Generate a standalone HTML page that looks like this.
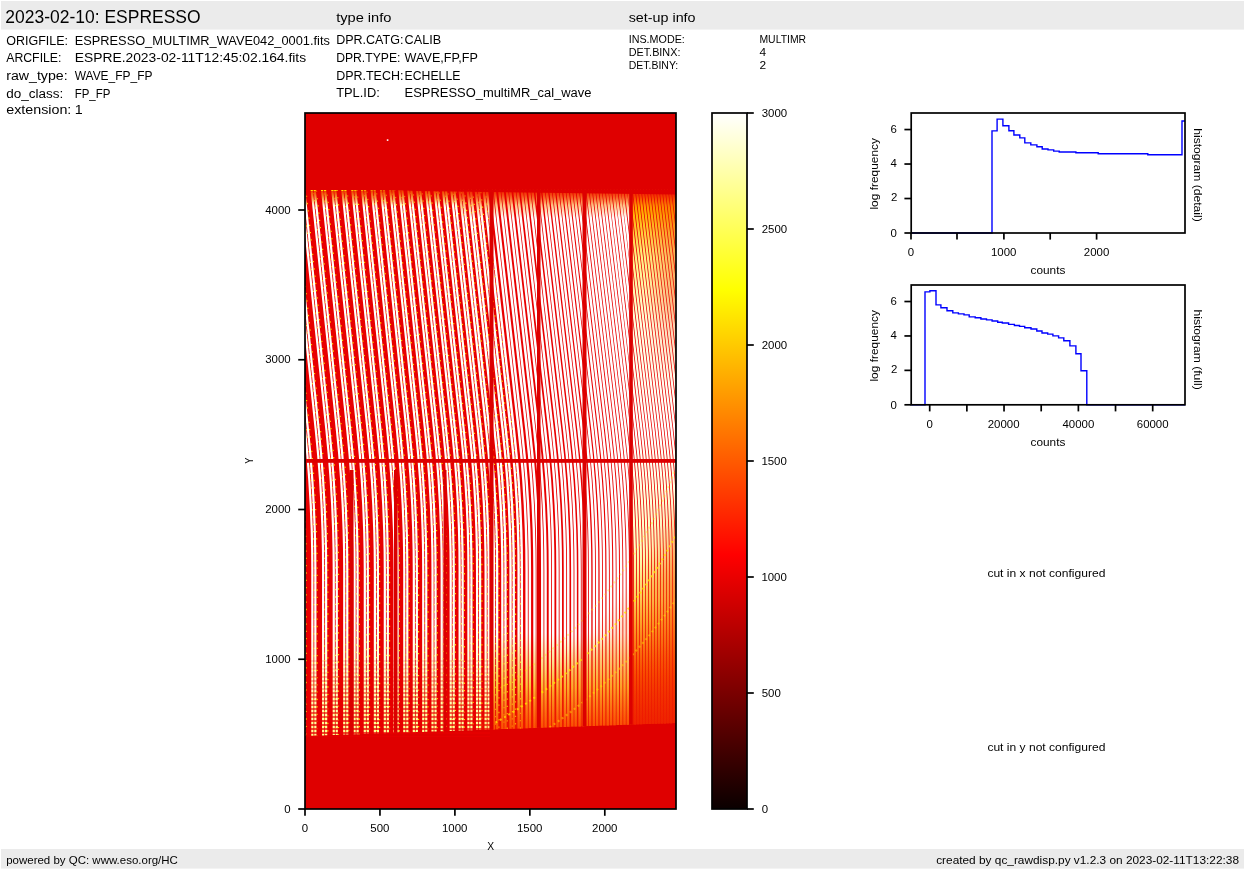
<!DOCTYPE html>
<html><head><meta charset="utf-8"><title>ESPRESSO raw display</title>
<style>html,body{margin:0;padding:0;background:#fff;width:1245px;height:870px;overflow:hidden}svg{display:block}text{font-family:"Liberation Sans",sans-serif}</style>
</head><body><svg width="1245" height="870" viewBox="0 0 1245 870"><rect x="1" y="1" width="1243" height="28.6" fill="#ebebeb"/><rect x="1" y="849" width="1243" height="19.6" fill="#ebebeb"/><defs><clipPath id="imclip"><rect x="305" y="113" width="371" height="696"/></clipPath></defs><g clip-path="url(#imclip)"><rect x="305" y="113" width="371" height="696" fill="#df0000"/><polygon points="305,190.0 676,190.0 676,723.0 305,736.0" fill="#e80000"/><defs><linearGradient id="rgrad" gradientUnits="userSpaceOnUse" x1="0" y1="191" x2="0" y2="728"><stop offset="0" stop-color="#ff6000"/><stop offset="0.04" stop-color="#ffb000"/><stop offset="0.12" stop-color="#fff080"/><stop offset="0.25" stop-color="#ffffe0"/><stop offset="0.45" stop-color="#ffffff"/><stop offset="0.66" stop-color="#ffffc0"/><stop offset="0.8" stop-color="#ffd040"/><stop offset="0.9" stop-color="#ff8000"/><stop offset="1" stop-color="#f03000"/></linearGradient><linearGradient id="mgrad" gradientUnits="userSpaceOnUse" x1="0" y1="191" x2="0" y2="730"><stop offset="0" stop-color="#ff8000"/><stop offset="0.05" stop-color="#ffffff"/><stop offset="0.82" stop-color="#ffffff"/><stop offset="0.92" stop-color="#ffe040"/><stop offset="1" stop-color="#ff6000"/></linearGradient><linearGradient id="lgrad" gradientUnits="userSpaceOnUse" x1="0" y1="191" x2="0" y2="736"><stop offset="0" stop-color="#ffe000"/><stop offset="0.03" stop-color="#ffffff"/><stop offset="0.8" stop-color="#ffffff"/><stop offset="1" stop-color="#ffff90"/></linearGradient><clipPath id="cl"><rect x="305" y="113" width="326" height="696"/></clipPath><clipPath id="cr"><rect x="631" y="113" width="45" height="696"/></clipPath><linearGradient id="bf" gradientUnits="userSpaceOnUse" x1="0" y1="640" x2="0" y2="736"><stop offset="0" stop-color="#e80000" stop-opacity="0"/><stop offset="1" stop-color="#e80000" stop-opacity="0.25"/></linearGradient><radialGradient id="wedge" gradientUnits="userSpaceOnUse" cx="270" cy="325" r="600"><stop offset="0.735" stop-color="#ff6000" stop-opacity="0"/><stop offset="0.775" stop-color="#ff6000" stop-opacity="0.22"/><stop offset="0.9" stop-color="#f84000" stop-opacity="0.38"/><stop offset="1" stop-color="#f03000" stop-opacity="0.45"/></radialGradient><linearGradient id="tf" gradientUnits="userSpaceOnUse" x1="0" y1="191" x2="0" y2="205"><stop offset="0" stop-color="#e80000" stop-opacity="0.7"/><stop offset="1" stop-color="#e80000" stop-opacity="0"/></linearGradient></defs><g clip-path="url(#cl)"><path d="M223.65,190.0 L231.00,260.0 L238.35,330.0 L245.70,400.0 L248.85,430.0 L251.24,455.0 L253.16,480.0 L254.62,505.0 L255.60,530.0 L256.05,550.0 L256.20,570.0 L256.20,736.0" stroke="url(#lgrad)" stroke-width="2.20" fill="none"/><path d="M225.35,190.0 L232.70,260.0 L240.05,330.0 L247.40,400.0 L250.55,430.0 L252.94,455.0 L254.86,480.0 L256.32,505.0 L257.30,530.0 L257.75,550.0 L257.90,570.0 L257.90,736.0" stroke="#ffd800" stroke-width="1.20" fill="none" stroke-dasharray="1.3 6" stroke-dashoffset="2.3"/><path d="M226.65,190.0 L234.00,260.0 L241.35,330.0 L248.70,400.0 L251.85,430.0 L254.24,455.0 L256.16,480.0 L257.62,505.0 L258.60,530.0 L259.05,550.0 L259.20,570.0 L259.20,736.0" stroke="url(#lgrad)" stroke-width="2.20" fill="none"/><path d="M228.35,190.0 L235.70,260.0 L243.05,330.0 L250.40,400.0 L253.55,430.0 L255.94,455.0 L257.86,480.0 L259.32,505.0 L260.30,530.0 L260.75,550.0 L260.90,570.0 L260.90,736.0" stroke="#ffd800" stroke-width="1.20" fill="none" stroke-dasharray="1.3 6" stroke-dashoffset="1.1"/><path d="M235.19,190.0 L242.54,260.0 L249.89,330.0 L257.24,400.0 L260.39,430.0 L262.78,455.0 L264.70,480.0 L266.15,505.0 L267.14,530.0 L267.59,550.0 L267.74,570.0 L267.74,736.0" stroke="url(#lgrad)" stroke-width="2.20" fill="none"/><path d="M236.89,190.0 L244.24,260.0 L251.59,330.0 L258.94,400.0 L262.09,430.0 L264.48,455.0 L266.40,480.0 L267.85,505.0 L268.84,530.0 L269.29,550.0 L269.44,570.0 L269.44,736.0" stroke="#ffd800" stroke-width="1.20" fill="none" stroke-dasharray="1.3 6" stroke-dashoffset="4.6"/><path d="M238.19,190.0 L245.54,260.0 L252.89,330.0 L260.24,400.0 L263.39,430.0 L265.78,455.0 L267.70,480.0 L269.15,505.0 L270.14,530.0 L270.59,550.0 L270.74,570.0 L270.74,736.0" stroke="url(#lgrad)" stroke-width="2.20" fill="none"/><path d="M239.89,190.0 L247.24,260.0 L254.59,330.0 L261.94,400.0 L265.09,430.0 L267.48,455.0 L269.40,480.0 L270.85,505.0 L271.84,530.0 L272.29,550.0 L272.44,570.0 L272.44,736.0" stroke="#ffd800" stroke-width="1.20" fill="none" stroke-dasharray="1.3 6" stroke-dashoffset="0.5"/><path d="M246.57,190.0 L253.92,260.0 L261.27,330.0 L268.62,400.0 L271.77,430.0 L274.16,455.0 L276.08,480.0 L277.54,505.0 L278.52,530.0 L278.97,550.0 L279.12,570.0 L279.12,736.0" stroke="url(#lgrad)" stroke-width="2.20" fill="none"/><path d="M248.27,190.0 L255.62,260.0 L262.97,330.0 L270.32,400.0 L273.47,430.0 L275.86,455.0 L277.78,480.0 L279.24,505.0 L280.22,530.0 L280.67,550.0 L280.82,570.0 L280.82,736.0" stroke="#ffd800" stroke-width="1.20" fill="none" stroke-dasharray="1.3 6" stroke-dashoffset="3.8"/><path d="M249.57,190.0 L256.92,260.0 L264.27,330.0 L271.62,400.0 L274.77,430.0 L277.16,455.0 L279.08,480.0 L280.54,505.0 L281.52,530.0 L281.97,550.0 L282.12,570.0 L282.12,736.0" stroke="url(#lgrad)" stroke-width="2.20" fill="none"/><path d="M251.27,190.0 L258.62,260.0 L265.97,330.0 L273.32,400.0 L276.47,430.0 L278.86,455.0 L280.78,480.0 L282.24,505.0 L283.22,530.0 L283.67,550.0 L283.82,570.0 L283.82,736.0" stroke="#ffd800" stroke-width="1.20" fill="none" stroke-dasharray="1.3 6" stroke-dashoffset="2.6"/><path d="M257.80,190.0 L265.15,260.0 L272.50,330.0 L279.85,400.0 L283.00,430.0 L285.39,455.0 L287.31,480.0 L288.77,505.0 L289.75,530.0 L290.20,550.0 L290.35,570.0 L290.35,736.0" stroke="url(#lgrad)" stroke-width="2.20" fill="none"/><path d="M259.50,190.0 L266.85,260.0 L274.20,330.0 L281.55,400.0 L284.70,430.0 L287.09,455.0 L289.01,480.0 L290.47,505.0 L291.45,530.0 L291.90,550.0 L292.05,570.0 L292.05,736.0" stroke="#ffd800" stroke-width="1.20" fill="none" stroke-dasharray="1.3 6" stroke-dashoffset="0.4"/><path d="M260.80,190.0 L268.15,260.0 L275.50,330.0 L282.85,400.0 L286.00,430.0 L288.39,455.0 L290.31,480.0 L291.77,505.0 L292.75,530.0 L293.20,550.0 L293.35,570.0 L293.35,736.0" stroke="url(#lgrad)" stroke-width="2.20" fill="none"/><path d="M262.50,190.0 L269.85,260.0 L277.20,330.0 L284.55,400.0 L287.70,430.0 L290.09,455.0 L292.01,480.0 L293.47,505.0 L294.45,530.0 L294.90,550.0 L295.05,570.0 L295.05,736.0" stroke="#ffd800" stroke-width="1.20" fill="none" stroke-dasharray="1.3 6" stroke-dashoffset="3.6"/><path d="M268.88,190.0 L276.23,260.0 L283.58,330.0 L290.93,400.0 L294.08,430.0 L296.47,455.0 L298.39,480.0 L299.84,505.0 L300.83,530.0 L301.28,550.0 L301.43,570.0 L301.43,736.0" stroke="url(#lgrad)" stroke-width="2.20" fill="none"/><path d="M270.58,190.0 L277.93,260.0 L285.28,330.0 L292.63,400.0 L295.78,430.0 L298.17,455.0 L300.09,480.0 L301.54,505.0 L302.53,530.0 L302.98,550.0 L303.13,570.0 L303.13,736.0" stroke="#ffd800" stroke-width="1.20" fill="none" stroke-dasharray="1.3 6" stroke-dashoffset="0.3"/><path d="M271.88,190.0 L279.23,260.0 L286.58,330.0 L293.93,400.0 L297.08,430.0 L299.47,455.0 L301.39,480.0 L302.84,505.0 L303.83,530.0 L304.28,550.0 L304.43,570.0 L304.43,736.0" stroke="url(#lgrad)" stroke-width="2.20" fill="none"/><path d="M273.58,190.0 L280.93,260.0 L288.28,330.0 L295.63,400.0 L298.78,430.0 L301.17,455.0 L303.09,480.0 L304.54,505.0 L305.53,530.0 L305.98,550.0 L306.13,570.0 L306.13,736.0" stroke="#ffd800" stroke-width="1.20" fill="none" stroke-dasharray="1.3 6" stroke-dashoffset="3.0"/><path d="M279.81,190.0 L287.16,260.0 L294.51,330.0 L301.86,400.0 L305.01,430.0 L307.40,455.0 L309.32,480.0 L310.77,505.0 L311.76,530.0 L312.21,550.0 L312.36,570.0 L312.36,735.7" stroke="url(#lgrad)" stroke-width="2.20" fill="none"/><path d="M281.51,190.0 L288.86,260.0 L296.21,330.0 L303.56,400.0 L306.71,430.0 L309.10,455.0 L311.02,480.0 L312.47,505.0 L313.46,530.0 L313.91,550.0 L314.06,570.0 L314.06,735.7" stroke="#ffd800" stroke-width="1.20" fill="none" stroke-dasharray="1.3 6" stroke-dashoffset="0.5"/><path d="M282.81,190.0 L290.16,260.0 L297.51,330.0 L304.86,400.0 L308.01,430.0 L310.40,455.0 L312.32,480.0 L313.77,505.0 L314.76,530.0 L315.21,550.0 L315.36,570.0 L315.36,735.6" stroke="url(#lgrad)" stroke-width="2.20" fill="none"/><path d="M284.51,190.0 L291.86,260.0 L299.21,330.0 L306.56,400.0 L309.71,430.0 L312.10,455.0 L314.02,480.0 L315.47,505.0 L316.46,530.0 L316.91,550.0 L317.06,570.0 L317.06,735.6" stroke="#ffd800" stroke-width="1.20" fill="none" stroke-dasharray="1.3 6" stroke-dashoffset="0.6"/><path d="M290.59,190.0 L297.94,260.0 L305.29,330.0 L312.64,400.0 L315.79,430.0 L318.18,455.0 L320.10,480.0 L321.55,505.0 L322.54,530.0 L322.99,550.0 L323.14,570.0 L323.14,735.4" stroke="url(#lgrad)" stroke-width="2.20" fill="none"/><path d="M292.29,190.0 L299.64,260.0 L306.99,330.0 L314.34,400.0 L317.49,430.0 L319.88,455.0 L321.80,480.0 L323.25,505.0 L324.24,530.0 L324.69,550.0 L324.84,570.0 L324.84,735.4" stroke="#ffd800" stroke-width="1.20" fill="none" stroke-dasharray="1.3 6" stroke-dashoffset="3.0"/><path d="M293.59,190.0 L300.94,260.0 L308.29,330.0 L315.64,400.0 L318.79,430.0 L321.18,455.0 L323.10,480.0 L324.55,505.0 L325.54,530.0 L325.99,550.0 L326.14,570.0 L326.14,735.3" stroke="url(#lgrad)" stroke-width="2.20" fill="none"/><path d="M295.29,190.0 L302.64,260.0 L309.99,330.0 L317.34,400.0 L320.49,430.0 L322.88,455.0 L324.80,480.0 L326.25,505.0 L327.24,530.0 L327.69,550.0 L327.84,570.0 L327.84,735.3" stroke="#ffd800" stroke-width="1.20" fill="none" stroke-dasharray="1.3 6" stroke-dashoffset="5.8"/><path d="M301.22,190.0 L308.57,260.0 L315.92,330.0 L323.27,400.0 L326.42,430.0 L328.81,455.0 L330.73,480.0 L332.19,505.0 L333.17,530.0 L333.62,550.0 L333.77,570.0 L333.77,735.0" stroke="url(#lgrad)" stroke-width="2.20" fill="none"/><path d="M302.92,190.0 L310.27,260.0 L317.62,330.0 L324.97,400.0 L328.12,430.0 L330.51,455.0 L332.43,480.0 L333.89,505.0 L334.87,530.0 L335.32,550.0 L335.47,570.0 L335.47,735.0" stroke="#ffd800" stroke-width="1.20" fill="none" stroke-dasharray="1.3 6" stroke-dashoffset="0.9"/><path d="M304.22,190.0 L311.57,260.0 L318.92,330.0 L326.27,400.0 L329.42,430.0 L331.81,455.0 L333.73,480.0 L335.19,505.0 L336.17,530.0 L336.62,550.0 L336.77,570.0 L336.77,734.9" stroke="url(#lgrad)" stroke-width="2.20" fill="none"/><path d="M305.92,190.0 L313.27,260.0 L320.62,330.0 L327.97,400.0 L331.12,430.0 L333.51,455.0 L335.43,480.0 L336.89,505.0 L337.87,530.0 L338.32,550.0 L338.47,570.0 L338.47,734.9" stroke="#ffd800" stroke-width="1.20" fill="none" stroke-dasharray="1.3 6" stroke-dashoffset="1.6"/><path d="M311.71,190.0 L319.06,260.0 L326.41,330.0 L333.76,400.0 L336.91,430.0 L339.30,455.0 L341.23,480.0 L342.68,505.0 L343.66,530.0 L344.11,550.0 L344.26,570.0 L344.26,734.6" stroke="url(#lgrad)" stroke-width="2.20" fill="none"/><path d="M313.41,190.0 L320.76,260.0 L328.11,330.0 L335.46,400.0 L338.61,430.0 L341.00,455.0 L342.93,480.0 L344.38,505.0 L345.36,530.0 L345.81,550.0 L345.96,570.0 L345.96,734.6" stroke="#ffd800" stroke-width="1.20" fill="none" stroke-dasharray="1.3 6" stroke-dashoffset="4.4"/><path d="M314.71,190.0 L322.06,260.0 L329.41,330.0 L336.76,400.0 L339.91,430.0 L342.30,455.0 L344.23,480.0 L345.68,505.0 L346.66,530.0 L347.11,550.0 L347.26,570.0 L347.26,734.5" stroke="url(#lgrad)" stroke-width="2.20" fill="none"/><path d="M316.41,190.0 L323.76,260.0 L331.11,330.0 L338.46,400.0 L341.61,430.0 L344.00,455.0 L345.93,480.0 L347.38,505.0 L348.36,530.0 L348.81,550.0 L348.96,570.0 L348.96,734.5" stroke="#ffd800" stroke-width="1.20" fill="none" stroke-dasharray="1.3 6" stroke-dashoffset="6.6"/><path d="M322.06,190.0 L329.41,260.0 L336.76,330.0 L344.11,400.0 L347.26,430.0 L349.65,455.0 L351.57,480.0 L353.03,505.0 L354.01,530.0 L354.46,550.0 L354.61,570.0 L354.61,734.3" stroke="url(#lgrad)" stroke-width="2.20" fill="none"/><path d="M323.76,190.0 L331.11,260.0 L338.46,330.0 L345.81,400.0 L348.96,430.0 L351.35,455.0 L353.27,480.0 L354.73,505.0 L355.71,530.0 L356.16,550.0 L356.31,570.0 L356.31,734.3" stroke="#ffd800" stroke-width="1.20" fill="none" stroke-dasharray="1.3 6" stroke-dashoffset="4.0"/><path d="M325.06,190.0 L332.41,260.0 L339.76,330.0 L347.11,400.0 L350.26,430.0 L352.65,455.0 L354.57,480.0 L356.03,505.0 L357.01,530.0 L357.46,550.0 L357.61,570.0 L357.61,734.2" stroke="url(#lgrad)" stroke-width="2.20" fill="none"/><path d="M326.76,190.0 L334.11,260.0 L341.46,330.0 L348.81,400.0 L351.96,430.0 L354.35,455.0 L356.27,480.0 L357.73,505.0 L358.71,530.0 L359.16,550.0 L359.31,570.0 L359.31,734.2" stroke="#ffd800" stroke-width="1.20" fill="none" stroke-dasharray="1.3 6" stroke-dashoffset="2.8"/><path d="M332.27,190.0 L339.62,260.0 L346.97,330.0 L354.32,400.0 L357.47,430.0 L359.86,455.0 L361.78,480.0 L363.24,505.0 L364.22,530.0 L364.67,550.0 L364.82,570.0 L364.82,733.9" stroke="url(#lgrad)" stroke-width="2.20" fill="none"/><path d="M333.97,190.0 L341.32,260.0 L348.67,330.0 L356.02,400.0 L359.17,430.0 L361.56,455.0 L363.48,480.0 L364.94,505.0 L365.92,530.0 L366.37,550.0 L366.52,570.0 L366.52,733.9" stroke="#ffd800" stroke-width="1.20" fill="none" stroke-dasharray="1.3 6" stroke-dashoffset="6.8"/><path d="M335.27,190.0 L342.62,260.0 L349.97,330.0 L357.32,400.0 L360.47,430.0 L362.86,455.0 L364.78,480.0 L366.24,505.0 L367.22,530.0 L367.67,550.0 L367.82,570.0 L367.82,733.8" stroke="url(#lgrad)" stroke-width="2.20" fill="none"/><path d="M336.97,190.0 L344.32,260.0 L351.67,330.0 L359.02,400.0 L362.17,430.0 L364.56,455.0 L366.48,480.0 L367.94,505.0 L368.92,530.0 L369.37,550.0 L369.52,570.0 L369.52,733.8" stroke="#ffd800" stroke-width="1.20" fill="none" stroke-dasharray="1.3 6" stroke-dashoffset="0.3"/><path d="M342.34,190.0 L349.69,260.0 L357.04,330.0 L364.39,400.0 L367.54,430.0 L369.94,455.0 L371.86,480.0 L373.31,505.0 L374.29,530.0 L374.74,550.0 L374.89,570.0 L374.89,733.6" stroke="url(#lgrad)" stroke-width="2.20" fill="none"/><path d="M344.04,190.0 L351.39,260.0 L358.74,330.0 L366.09,400.0 L369.24,430.0 L371.64,455.0 L373.56,480.0 L375.01,505.0 L375.99,530.0 L376.44,550.0 L376.59,570.0 L376.59,733.6" stroke="#ffd800" stroke-width="1.20" fill="none" stroke-dasharray="1.3 6" stroke-dashoffset="6.0"/><path d="M345.34,190.0 L352.69,260.0 L360.04,330.0 L367.39,400.0 L370.54,430.0 L372.94,455.0 L374.86,480.0 L376.31,505.0 L377.29,530.0 L377.74,550.0 L377.89,570.0 L377.89,733.4" stroke="url(#lgrad)" stroke-width="2.20" fill="none"/><path d="M347.04,190.0 L354.39,260.0 L361.74,330.0 L369.09,400.0 L372.24,430.0 L374.64,455.0 L376.56,480.0 L378.01,505.0 L378.99,530.0 L379.44,550.0 L379.59,570.0 L379.59,733.4" stroke="#ffd800" stroke-width="1.20" fill="none" stroke-dasharray="1.3 6" stroke-dashoffset="2.0"/><path d="M352.28,190.0 L359.63,260.0 L366.98,330.0 L374.33,400.0 L377.48,430.0 L379.87,455.0 L381.79,480.0 L383.25,505.0 L384.23,530.0 L384.68,550.0 L384.83,570.0 L384.83,733.2" stroke="url(#lgrad)" stroke-width="2.20" fill="none"/><path d="M353.98,190.0 L361.33,260.0 L368.68,330.0 L376.03,400.0 L379.18,430.0 L381.57,455.0 L383.49,480.0 L384.95,505.0 L385.93,530.0 L386.38,550.0 L386.53,570.0 L386.53,733.2" stroke="#ffd800" stroke-width="1.20" fill="none" stroke-dasharray="1.3 6" stroke-dashoffset="1.0"/><path d="M355.28,190.0 L362.63,260.0 L369.98,330.0 L377.33,400.0 L380.48,430.0 L382.87,455.0 L384.79,480.0 L386.25,505.0 L387.23,530.0 L387.68,550.0 L387.83,570.0 L387.83,733.1" stroke="url(#lgrad)" stroke-width="2.20" fill="none"/><path d="M356.98,190.0 L364.33,260.0 L371.68,330.0 L379.03,400.0 L382.18,430.0 L384.57,455.0 L386.49,480.0 L387.95,505.0 L388.93,530.0 L389.38,550.0 L389.53,570.0 L389.53,733.1" stroke="#ffd800" stroke-width="1.20" fill="none" stroke-dasharray="1.3 6" stroke-dashoffset="0.8"/><path d="M362.08,190.0 L369.43,260.0 L376.78,330.0 L384.13,400.0 L387.28,430.0 L389.67,455.0 L391.60,480.0 L393.05,505.0 L394.03,530.0 L394.48,550.0 L394.63,570.0 L394.63,732.9" stroke="url(#lgrad)" stroke-width="2.20" fill="none"/><path d="M363.78,190.0 L371.13,260.0 L378.48,330.0 L385.83,400.0 L388.98,430.0 L391.37,455.0 L393.30,480.0 L394.75,505.0 L395.73,530.0 L396.18,550.0 L396.33,570.0 L396.33,732.9" stroke="#ffd800" stroke-width="1.20" fill="none" stroke-dasharray="1.3 6" stroke-dashoffset="2.2"/><path d="M365.08,190.0 L372.43,260.0 L379.78,330.0 L387.13,400.0 L390.28,430.0 L392.67,455.0 L394.60,480.0 L396.05,505.0 L397.03,530.0 L397.48,550.0 L397.63,570.0 L397.63,732.8" stroke="url(#lgrad)" stroke-width="2.20" fill="none"/><path d="M366.78,190.0 L374.13,260.0 L381.48,330.0 L388.83,400.0 L391.98,430.0 L394.37,455.0 L396.30,480.0 L397.75,505.0 L398.73,530.0 L399.18,550.0 L399.33,570.0 L399.33,732.8" stroke="#ffd800" stroke-width="1.20" fill="none" stroke-dasharray="1.3 6" stroke-dashoffset="5.7"/><path d="M371.67,190.0 L379.04,260.0 L386.40,330.0 L393.77,400.0 L396.93,430.0 L399.33,455.0 L401.26,480.0 L402.71,505.0 L403.70,530.0 L404.15,550.0 L404.30,570.0 L404.30,732.5" stroke="url(#lgrad)" stroke-width="2.20" fill="none"/><path d="M373.33,190.0 L380.71,260.0 L388.09,330.0 L395.46,400.0 L398.62,430.0 L401.02,455.0 L402.95,480.0 L404.41,505.0 L405.40,530.0 L405.85,550.0 L406.00,570.0 L406.00,732.5" stroke="#ffd800" stroke-width="1.20" fill="none" stroke-dasharray="1.3 6" stroke-dashoffset="1.3"/><path d="M374.60,190.0 L381.99,260.0 L389.37,330.0 L396.75,400.0 L399.92,430.0 L402.32,455.0 L404.25,480.0 L405.71,505.0 L406.70,530.0 L407.15,550.0 L407.30,570.0 L407.30,732.4" stroke="url(#lgrad)" stroke-width="2.20" fill="none"/><path d="M376.27,190.0 L383.66,260.0 L391.05,330.0 L398.44,400.0 L401.61,430.0 L404.02,455.0 L405.95,480.0 L407.41,505.0 L408.40,530.0 L408.85,550.0 L409.00,570.0 L409.00,732.4" stroke="#ffd800" stroke-width="1.20" fill="none" stroke-dasharray="1.3 6" stroke-dashoffset="4.1"/><path d="M381.01,190.0 L388.42,260.0 L395.84,330.0 L403.25,400.0 L406.43,430.0 L408.84,455.0 L410.78,480.0 L412.24,505.0 L413.24,530.0 L413.69,550.0 L413.84,570.0 L413.84,732.2" stroke="url(#lgrad)" stroke-width="2.20" fill="none"/><path d="M382.68,190.0 L390.10,260.0 L397.52,330.0 L404.94,400.0 L408.12,430.0 L410.53,455.0 L412.47,480.0 L413.94,505.0 L414.94,530.0 L415.39,550.0 L415.54,570.0 L415.54,732.2" stroke="#ffd800" stroke-width="1.20" fill="none" stroke-dasharray="1.3 6" stroke-dashoffset="4.5"/><path d="M383.95,190.0 L391.38,260.0 L398.80,330.0 L406.23,400.0 L409.41,430.0 L411.83,455.0 L413.77,480.0 L415.24,505.0 L416.24,530.0 L416.69,550.0 L416.84,570.0 L416.84,732.1" stroke="url(#lgrad)" stroke-width="2.20" fill="none"/><path d="M385.62,190.0 L393.05,260.0 L400.49,330.0 L407.92,400.0 L411.11,430.0 L413.53,455.0 L415.47,480.0 L416.94,505.0 L417.93,530.0 L418.39,550.0 L418.54,570.0 L418.54,732.1" stroke="#ffd800" stroke-width="1.20" fill="none" stroke-dasharray="1.3 6" stroke-dashoffset="2.6"/><path d="M390.23,190.0 L397.69,260.0 L405.14,330.0 L412.60,400.0 L415.80,430.0 L418.22,455.0 L420.17,480.0 L421.64,505.0 L422.64,530.0 L423.10,550.0 L423.25,570.0 L423.25,731.9" stroke="url(#lgrad)" stroke-width="2.20" fill="none"/><path d="M391.90,190.0 L399.36,260.0 L406.83,330.0 L414.29,400.0 L417.49,430.0 L419.92,455.0 L421.87,480.0 L423.34,505.0 L424.34,530.0 L424.80,550.0 L424.95,570.0 L424.95,731.9" stroke="#ffd800" stroke-width="1.20" fill="none" stroke-dasharray="1.3 6" stroke-dashoffset="3.8"/><path d="M393.17,190.0 L400.64,260.0 L408.11,330.0 L415.58,400.0 L418.78,430.0 L421.21,455.0 L423.16,480.0 L424.64,505.0 L425.64,530.0 L426.10,550.0 L426.25,570.0 L426.25,731.8" stroke="url(#lgrad)" stroke-width="2.20" fill="none"/><path d="M394.84,190.0 L402.31,260.0 L409.79,330.0 L417.27,400.0 L420.47,430.0 L422.91,455.0 L424.86,480.0 L426.34,505.0 L427.34,530.0 L427.80,550.0 L427.95,570.0 L427.95,731.8" stroke="#ffd800" stroke-width="1.20" fill="none" stroke-dasharray="1.3 6" stroke-dashoffset="0.4"/><path d="M399.33,190.0 L406.83,260.0 L414.32,330.0 L421.82,400.0 L425.04,430.0 L427.48,455.0 L429.44,480.0 L430.92,505.0 L431.92,530.0 L432.38,550.0 L432.54,570.0 L432.54,731.5" stroke="url(#lgrad)" stroke-width="2.20" fill="none"/><path d="M400.99,190.0 L408.50,260.0 L416.01,330.0 L423.51,400.0 L426.73,430.0 L429.17,455.0 L431.13,480.0 L432.62,505.0 L433.62,530.0 L434.08,550.0 L434.24,570.0 L434.24,731.5" stroke="#ffd800" stroke-width="1.20" fill="none" stroke-dasharray="1.3 6" stroke-dashoffset="0.4"/><path d="M402.27,190.0 L409.78,260.0 L417.29,330.0 L424.80,400.0 L428.02,430.0 L430.47,455.0 L432.43,480.0 L433.92,505.0 L434.92,530.0 L435.38,550.0 L435.54,570.0 L435.54,731.4" stroke="url(#lgrad)" stroke-width="2.20" fill="none"/><path d="M403.93,190.0 L411.45,260.0 L418.97,330.0 L426.49,400.0 L429.72,430.0 L432.16,455.0 L434.13,480.0 L435.61,505.0 L436.62,530.0 L437.08,550.0 L437.24,570.0 L437.24,731.4" stroke="#ffd800" stroke-width="1.20" fill="none" stroke-dasharray="1.3 6" stroke-dashoffset="1.4"/><path d="M408.30,190.0 L415.84,260.0 L423.38,330.0 L430.92,400.0 L434.15,430.0 L436.61,455.0 L438.58,480.0 L440.07,505.0 L441.08,530.0 L441.54,550.0 L441.69,570.0 L441.69,731.2" stroke="url(#lgrad)" stroke-width="2.20" fill="none"/><path d="M409.97,190.0 L417.51,260.0 L425.06,330.0 L432.61,400.0 L435.85,430.0 L438.30,455.0 L440.27,480.0 L441.77,505.0 L442.78,530.0 L443.24,550.0 L443.39,570.0 L443.39,731.2" stroke="#ffd800" stroke-width="1.20" fill="none" stroke-dasharray="1.3 6" stroke-dashoffset="4.8"/><path d="M411.24,190.0 L418.79,260.0 L426.35,330.0 L433.90,400.0 L437.14,430.0 L439.60,455.0 L441.57,480.0 L443.06,505.0 L444.08,530.0 L444.54,550.0 L444.69,570.0 L444.69,731.1" stroke="url(#lgrad)" stroke-width="2.20" fill="none"/><path d="M412.91,190.0 L420.47,260.0 L428.03,330.0 L435.59,400.0 L438.83,430.0 L441.29,455.0 L443.27,480.0 L444.76,505.0 L445.78,530.0 L446.24,550.0 L446.39,570.0 L446.39,731.1" stroke="#ffd800" stroke-width="1.20" fill="none" stroke-dasharray="1.3 6" stroke-dashoffset="3.0"/><path d="M417.15,190.0 L424.73,260.0 L432.32,330.0 L439.90,400.0 L443.15,430.0 L445.61,455.0 L447.59,480.0 L449.09,505.0 L450.11,530.0 L450.57,550.0 L450.73,570.0 L450.73,730.9" stroke="url(#lgrad)" stroke-width="2.20" fill="none"/><path d="M418.82,190.0 L426.41,260.0 L434.00,330.0 L441.59,400.0 L444.84,430.0 L447.31,455.0 L449.29,480.0 L450.79,505.0 L451.81,530.0 L452.27,550.0 L452.43,570.0 L452.43,730.9" stroke="#ffd800" stroke-width="1.20" fill="none" stroke-dasharray="1.3 6" stroke-dashoffset="2.2"/><path d="M420.09,190.0 L427.69,260.0 L435.28,330.0 L442.88,400.0 L446.13,430.0 L448.60,455.0 L450.59,480.0 L452.09,505.0 L453.11,530.0 L453.57,550.0 L453.73,570.0 L453.73,730.8" stroke="url(#lgrad)" stroke-width="2.20" fill="none"/><path d="M421.76,190.0 L429.36,260.0 L436.96,330.0 L444.57,400.0 L447.82,430.0 L450.30,455.0 L452.29,480.0 L453.79,505.0 L454.81,530.0 L455.27,550.0 L455.43,570.0 L455.43,730.8" stroke="#ffd800" stroke-width="1.20" fill="none" stroke-dasharray="1.3 6" stroke-dashoffset="4.1"/><path d="M425.88,190.0 L433.51,260.0 L441.13,330.0 L448.75,400.0 L452.02,430.0 L454.50,455.0 L456.49,480.0 L458.00,505.0 L459.02,530.0 L459.48,550.0 L459.64,570.0 L459.64,730.6" stroke="url(#lgrad)" stroke-width="2.20" fill="none"/><path d="M427.55,190.0 L435.18,260.0 L442.81,330.0 L450.44,400.0 L453.71,430.0 L456.19,455.0 L458.19,480.0 L459.70,505.0 L460.72,530.0 L461.18,550.0 L461.34,570.0 L461.34,730.6" stroke="#ffd800" stroke-width="1.20" fill="none" stroke-dasharray="1.3 6" stroke-dashoffset="3.2"/><path d="M428.82,190.0 L436.46,260.0 L444.10,330.0 L451.73,400.0 L455.00,430.0 L457.49,455.0 L459.48,480.0 L460.99,505.0 L462.02,530.0 L462.48,550.0 L462.64,570.0 L462.64,730.5" stroke="url(#lgrad)" stroke-width="2.20" fill="none"/><path d="M430.49,190.0 L438.13,260.0 L445.78,330.0 L453.42,400.0 L456.70,430.0 L459.18,455.0 L461.18,480.0 L462.69,505.0 L463.72,530.0 L464.18,550.0 L464.34,570.0 L464.34,730.5" stroke="#ffd800" stroke-width="1.20" fill="none" stroke-dasharray="1.3 6" stroke-dashoffset="2.1"/><path d="M434.50,190.0 L442.16,260.0 L449.82,330.0 L457.49,400.0 L460.77,430.0 L463.26,455.0 L465.27,480.0 L466.78,505.0 L467.81,530.0 L468.28,550.0 L468.43,570.0 L468.43,730.3" stroke="url(#lgrad)" stroke-width="2.20" fill="none"/><path d="M436.16,190.0 L443.83,260.0 L451.50,330.0 L459.17,400.0 L462.46,430.0 L464.96,455.0 L466.96,480.0 L468.48,505.0 L469.51,530.0 L469.98,550.0 L470.13,570.0 L470.13,730.3" stroke="#ffd800" stroke-width="1.20" fill="none" stroke-dasharray="1.3 6" stroke-dashoffset="5.6"/><path d="M437.44,190.0 L445.11,260.0 L452.79,330.0 L460.47,400.0 L463.76,430.0 L466.25,455.0 L468.26,480.0 L469.78,505.0 L470.81,530.0 L471.28,550.0 L471.43,570.0 L471.43,730.2" stroke="url(#lgrad)" stroke-width="2.20" fill="none"/><path d="M439.10,190.0 L446.79,260.0 L454.47,330.0 L462.16,400.0 L465.45,430.0 L467.95,455.0 L469.96,480.0 L471.48,505.0 L472.50,530.0 L472.98,550.0 L473.13,570.0 L473.13,730.2" stroke="#ffd800" stroke-width="1.20" fill="none" stroke-dasharray="1.3 6" stroke-dashoffset="4.9"/><path d="M442.98,190.0 L450.68,260.0 L458.38,330.0 L466.08,400.0 L469.39,430.0 L471.89,455.0 L473.90,480.0 L475.43,505.0 L476.46,530.0 L476.93,550.0 L477.09,570.0 L477.09,730.0" stroke="url(#lgrad)" stroke-width="2.23" fill="none"/><path d="M444.66,190.0 L452.37,260.0 L460.08,330.0 L467.79,400.0 L471.09,430.0 L473.60,455.0 L475.62,480.0 L477.14,505.0 L478.17,530.0 L478.65,550.0 L478.80,570.0 L478.80,730.0" stroke="#ffd800" stroke-width="1.20" fill="none" stroke-dasharray="1.3 6" stroke-dashoffset="1.7"/><path d="M445.95,190.0 L453.67,260.0 L461.39,330.0 L469.10,400.0 L472.41,430.0 L474.92,455.0 L476.94,480.0 L478.46,505.0 L479.49,530.0 L479.97,550.0 L480.12,570.0 L480.12,729.9" stroke="url(#lgrad)" stroke-width="2.23" fill="none"/><path d="M447.63,190.0 L455.36,260.0 L463.08,330.0 L470.81,400.0 L474.12,430.0 L476.63,455.0 L478.65,480.0 L480.17,505.0 L481.21,530.0 L481.68,550.0 L481.84,570.0 L481.84,729.9" stroke="#ffd800" stroke-width="1.20" fill="none" stroke-dasharray="1.3 6" stroke-dashoffset="4.0"/><path d="M451.34,190.0 L459.08,260.0 L466.83,330.0 L474.57,400.0 L477.88,430.0 L480.40,455.0 L482.43,480.0 L483.96,505.0 L484.99,530.0 L485.47,550.0 L485.63,570.0 L485.63,729.7" stroke="url(#lgrad)" stroke-width="2.26" fill="none"/><path d="M453.04,190.0 L460.79,260.0 L468.54,330.0 L476.29,400.0 L479.61,430.0 L482.13,455.0 L484.15,480.0 L485.69,505.0 L486.72,530.0 L487.20,550.0 L487.36,570.0 L487.36,729.7" stroke="#ffd800" stroke-width="1.20" fill="none" stroke-dasharray="1.3 6" stroke-dashoffset="3.7"/><path d="M454.36,190.0 L462.11,260.0 L469.87,330.0 L477.62,400.0 L480.94,430.0 L483.47,455.0 L485.49,480.0 L487.03,505.0 L488.07,530.0 L488.54,550.0 L488.70,570.0 L488.70,729.6" stroke="url(#lgrad)" stroke-width="2.26" fill="none"/><path d="M456.05,190.0 L463.81,260.0 L471.58,330.0 L479.34,400.0 L482.67,430.0 L485.19,455.0 L487.22,480.0 L488.76,505.0 L489.80,530.0 L490.27,550.0 L490.43,570.0 L490.43,729.6" stroke="#ffd800" stroke-width="1.20" fill="none" stroke-dasharray="1.3 6" stroke-dashoffset="6.1"/><path d="M459.60,190.0 L467.38,260.0 L475.16,330.0 L482.93,400.0 L486.27,430.0 L488.80,455.0 L490.83,480.0 L492.37,505.0 L493.41,530.0 L493.89,550.0 L494.05,570.0 L494.05,729.4" stroke="url(#mgrad)" stroke-width="2.29" fill="none"/><path d="M461.31,190.0 L469.09,260.0 L476.88,330.0 L484.67,400.0 L488.01,430.0 L490.54,455.0 L492.58,480.0 L494.11,505.0 L495.16,530.0 L495.63,550.0 L495.79,570.0 L495.79,729.4" stroke="#ffd800" stroke-width="1.20" fill="none" stroke-dasharray="1.3 6" stroke-dashoffset="5.1"/><path d="M462.64,190.0 L470.44,260.0 L478.23,330.0 L486.02,400.0 L489.36,430.0 L491.90,455.0 L493.94,480.0 L495.48,505.0 L496.52,530.0 L497.00,550.0 L497.16,570.0 L497.16,729.3" stroke="url(#mgrad)" stroke-width="2.29" fill="none"/><path d="M464.35,190.0 L472.16,260.0 L479.96,330.0 L487.76,400.0 L491.10,430.0 L493.64,455.0 L495.68,480.0 L497.22,505.0 L498.27,530.0 L498.74,550.0 L498.90,570.0 L498.90,729.3" stroke="#ffd800" stroke-width="1.20" fill="none" stroke-dasharray="1.3 6" stroke-dashoffset="2.0"/><path d="M467.74,190.0 L475.55,260.0 L483.37,330.0 L491.19,400.0 L494.54,430.0 L497.08,455.0 L499.13,480.0 L500.67,505.0 L501.72,530.0 L502.20,550.0 L502.36,570.0 L502.36,729.1" stroke="url(#mgrad)" stroke-width="2.32" fill="none"/><path d="M469.46,190.0 L477.29,260.0 L485.11,330.0 L492.94,400.0 L496.29,430.0 L498.84,455.0 L500.88,480.0 L502.43,505.0 L503.48,530.0 L503.96,550.0 L504.12,570.0 L504.12,729.1" stroke="#ffd800" stroke-width="1.20" fill="none" stroke-dasharray="1.3 6" stroke-dashoffset="6.9"/><path d="M470.82,190.0 L478.65,260.0 L486.48,330.0 L494.31,400.0 L497.67,430.0 L500.22,455.0 L502.27,480.0 L503.81,505.0 L504.86,530.0 L505.34,550.0 L505.50,570.0 L505.50,729.0" stroke="url(#mgrad)" stroke-width="2.32" fill="none"/><path d="M472.54,190.0 L480.38,260.0 L488.22,330.0 L496.06,400.0 L499.42,430.0 L501.97,455.0 L504.02,480.0 L505.57,505.0 L506.62,530.0 L507.10,550.0 L507.26,570.0 L507.26,729.0" stroke="#ffd800" stroke-width="1.20" fill="none" stroke-dasharray="1.3 6" stroke-dashoffset="0.8"/><path d="M475.77,190.0 L483.62,260.0 L491.48,330.0 L499.33,400.0 L502.70,430.0 L505.25,455.0 L507.31,480.0 L508.86,505.0 L509.91,530.0 L510.39,550.0 L510.55,570.0 L510.55,728.8" stroke="url(#mgrad)" stroke-width="2.35" fill="none"/><path d="M477.51,190.0 L485.37,260.0 L493.23,330.0 L501.10,400.0 L504.47,430.0 L507.02,455.0 L509.08,480.0 L510.63,505.0 L511.69,530.0 L512.17,550.0 L512.33,570.0 L512.33,728.8" stroke="#ffd800" stroke-width="1.20" fill="none" stroke-dasharray="1.3 6" stroke-dashoffset="2.9"/><path d="M478.88,190.0 L486.75,260.0 L494.62,330.0 L502.49,400.0 L505.87,430.0 L508.42,455.0 L510.48,480.0 L512.04,505.0 L513.09,530.0 L513.57,550.0 L513.73,570.0 L513.73,728.7" stroke="url(#mgrad)" stroke-width="2.35" fill="none"/><path d="M480.62,190.0 L488.50,260.0 L496.38,330.0 L504.26,400.0 L507.63,430.0 L510.19,455.0 L512.25,480.0 L513.81,505.0 L514.87,530.0 L515.35,550.0 L515.51,570.0 L515.51,728.7" stroke="#ffd800" stroke-width="1.20" fill="none" stroke-dasharray="1.3 6" stroke-dashoffset="5.3"/><path d="M483.69,190.0 L491.58,260.0 L499.47,330.0 L507.37,400.0 L510.75,430.0 L513.32,455.0 L515.38,480.0 L516.94,505.0 L518.00,530.0 L518.48,550.0 L518.64,570.0 L518.64,728.5" stroke="url(#mgrad)" stroke-width="2.38" fill="none"/><path d="M485.44,190.0 L493.34,260.0 L501.24,330.0 L509.14,400.0 L512.53,430.0 L515.10,455.0 L517.17,480.0 L518.73,505.0 L519.78,530.0 L520.27,550.0 L520.43,570.0 L520.43,728.5" stroke="#ffd800" stroke-width="1.20" fill="none" stroke-dasharray="1.3 6" stroke-dashoffset="1.1"/><path d="M486.84,190.0 L494.75,260.0 L502.65,330.0 L510.56,400.0 L513.95,430.0 L516.52,455.0 L518.59,480.0 L520.15,505.0 L521.21,530.0 L521.69,550.0 L521.86,570.0 L521.86,728.4" stroke="url(#mgrad)" stroke-width="2.38" fill="none"/><path d="M491.51,190.0 L499.44,260.0 L507.36,330.0 L515.29,400.0 L518.69,430.0 L521.27,455.0 L523.34,480.0 L524.91,505.0 L525.97,530.0 L526.46,550.0 L526.62,570.0 L526.62,728.2" stroke="url(#mgrad)" stroke-width="2.41" fill="none"/><path d="M494.69,190.0 L502.63,260.0 L510.58,330.0 L518.52,400.0 L521.92,430.0 L524.51,455.0 L526.58,480.0 L528.15,505.0 L529.22,530.0 L529.70,550.0 L529.87,570.0 L529.87,728.1" stroke="url(#mgrad)" stroke-width="2.41" fill="none"/><path d="M499.22,190.0 L507.18,260.0 L515.15,330.0 L523.11,400.0 L526.52,430.0 L529.11,455.0 L531.20,480.0 L532.77,505.0 L533.84,530.0 L534.32,550.0 L534.49,570.0 L534.49,728.0" stroke="url(#mgrad)" stroke-width="2.44" fill="none"/><path d="M502.43,190.0 L510.41,260.0 L518.39,330.0 L526.37,400.0 L529.79,430.0 L532.39,455.0 L534.47,480.0 L536.05,505.0 L537.12,530.0 L537.61,550.0 L537.77,570.0 L537.77,727.9" stroke="url(#mgrad)" stroke-width="2.44" fill="none"/><path d="M506.83,190.0 L514.83,260.0 L522.83,330.0 L530.83,400.0 L534.26,430.0 L536.86,455.0 L538.95,480.0 L540.53,505.0 L541.60,530.0 L542.09,550.0 L542.26,570.0 L542.26,727.7" stroke="url(#mgrad)" stroke-width="2.45" fill="none"/><path d="M510.07,190.0 L518.08,260.0 L526.09,330.0 L534.11,400.0 L537.54,430.0 L540.15,455.0 L542.25,480.0 L543.83,505.0 L544.90,530.0 L545.39,550.0 L545.56,570.0 L545.56,727.6" stroke="url(#mgrad)" stroke-width="2.45" fill="none"/><path d="M514.35,190.0 L522.39,260.0 L530.42,330.0 L538.45,400.0 L541.90,430.0 L544.51,455.0 L546.61,480.0 L548.20,505.0 L549.28,530.0 L549.77,550.0 L549.93,570.0 L549.93,727.4" stroke="url(#mgrad)" stroke-width="2.45" fill="none"/><path d="M517.58,190.0 L525.63,260.0 L533.68,330.0 L541.73,400.0 L545.18,430.0 L547.80,455.0 L549.91,480.0 L551.50,505.0 L552.58,530.0 L553.07,550.0 L553.23,570.0 L553.23,727.3" stroke="url(#mgrad)" stroke-width="2.45" fill="none"/><path d="M521.77,190.0 L529.84,260.0 L537.91,330.0 L545.98,400.0 L549.43,430.0 L552.06,455.0 L554.17,480.0 L555.76,505.0 L556.85,530.0 L557.34,550.0 L557.50,570.0 L557.50,727.2" stroke="url(#mgrad)" stroke-width="2.45" fill="none"/><path d="M525.00,190.0 L533.09,260.0 L541.17,330.0 L549.25,400.0 L552.72,430.0 L555.35,455.0 L557.46,480.0 L559.06,505.0 L560.14,530.0 L560.64,550.0 L560.80,570.0 L560.80,727.0" stroke="url(#mgrad)" stroke-width="2.45" fill="none"/><path d="M529.09,190.0 L537.19,260.0 L545.29,330.0 L553.40,400.0 L556.87,430.0 L559.51,455.0 L561.62,480.0 L563.23,505.0 L564.31,530.0 L564.81,550.0 L564.97,570.0 L564.97,726.9" stroke="url(#mgrad)" stroke-width="2.45" fill="none"/><path d="M532.32,190.0 L540.44,260.0 L548.56,330.0 L556.68,400.0 L560.15,430.0 L562.79,455.0 L564.92,480.0 L566.52,505.0 L567.61,530.0 L568.11,550.0 L568.27,570.0 L568.27,726.8" stroke="url(#mgrad)" stroke-width="2.45" fill="none"/><path d="M536.31,190.0 L544.44,260.0 L552.58,330.0 L560.72,400.0 L564.20,430.0 L566.85,455.0 L568.98,480.0 L570.59,505.0 L571.68,530.0 L572.17,550.0 L572.34,570.0 L572.34,726.6" stroke="url(#mgrad)" stroke-width="2.45" fill="none"/><path d="M539.54,190.0 L547.69,260.0 L555.84,330.0 L564.00,400.0 L567.49,430.0 L570.14,455.0 L572.27,480.0 L573.88,505.0 L574.98,530.0 L575.47,550.0 L575.64,570.0 L575.64,726.5" stroke="url(#mgrad)" stroke-width="2.45" fill="none"/><path d="M543.43,190.0 L551.60,260.0 L559.77,330.0 L567.94,400.0 L571.44,430.0 L574.10,455.0 L576.23,480.0 L577.85,505.0 L578.94,530.0 L579.44,550.0 L579.61,570.0 L579.61,726.4" stroke="url(#mgrad)" stroke-width="2.45" fill="none"/><path d="M546.66,190.0 L554.85,260.0 L563.03,330.0 L571.22,400.0 L574.72,430.0 L577.39,455.0 L579.53,480.0 L581.14,505.0 L582.24,530.0 L582.74,550.0 L582.91,570.0 L582.91,726.3" stroke="url(#mgrad)" stroke-width="2.45" fill="none"/><path d="M550.45,190.0 L558.66,260.0 L566.86,330.0 L575.06,400.0 L578.58,430.0 L581.25,455.0 L583.39,480.0 L585.01,505.0 L586.11,530.0 L586.61,550.0 L586.78,570.0 L586.78,726.1" stroke="url(#mgrad)" stroke-width="2.45" fill="none"/><path d="M553.69,190.0 L561.90,260.0 L570.12,330.0 L578.34,400.0 L581.86,430.0 L584.53,455.0 L586.68,480.0 L588.31,505.0 L589.41,530.0 L589.91,550.0 L590.08,570.0 L590.08,726.0" stroke="url(#mgrad)" stroke-width="2.45" fill="none"/><path d="M557.38,190.0 L565.62,260.0 L573.85,330.0 L582.09,400.0 L585.62,430.0 L588.30,455.0 L590.45,480.0 L592.08,505.0 L593.18,530.0 L593.69,550.0 L593.85,570.0 L593.85,725.9" stroke="url(#mgrad)" stroke-width="2.45" fill="none"/><path d="M560.62,190.0 L568.87,260.0 L577.12,330.0 L585.37,400.0 L588.90,430.0 L591.59,455.0 L593.74,480.0 L595.38,505.0 L596.48,530.0 L596.99,550.0 L597.15,570.0 L597.15,725.8" stroke="url(#mgrad)" stroke-width="2.45" fill="none"/><path d="M564.22,190.0 L572.49,260.0 L580.76,330.0 L589.02,400.0 L592.56,430.0 L595.25,455.0 L597.42,480.0 L599.05,505.0 L600.16,530.0 L600.66,550.0 L600.83,570.0 L600.83,725.6" stroke="url(#mgrad)" stroke-width="2.45" fill="none"/><path d="M567.45,190.0 L575.74,260.0 L584.02,330.0 L592.30,400.0 L595.85,430.0 L598.54,455.0 L600.71,480.0 L602.35,505.0 L603.46,530.0 L603.96,550.0 L604.13,570.0 L604.13,725.5" stroke="url(#mgrad)" stroke-width="2.45" fill="none"/><path d="M570.97,190.0 L579.26,260.0 L587.56,330.0 L595.86,400.0 L599.42,430.0 L602.12,455.0 L604.29,480.0 L605.93,505.0 L607.04,530.0 L607.55,550.0 L607.72,570.0 L607.72,725.4" stroke="url(#mgrad)" stroke-width="2.45" fill="none"/><path d="M574.20,190.0 L582.51,260.0 L590.83,330.0 L599.14,400.0 L602.70,430.0 L605.41,455.0 L607.58,480.0 L609.22,505.0 L610.34,530.0 L610.85,550.0 L611.02,570.0 L611.02,725.3" stroke="url(#mgrad)" stroke-width="2.45" fill="none"/><path d="M577.62,190.0 L585.95,260.0 L594.28,330.0 L602.61,400.0 L606.18,430.0 L608.89,455.0 L611.06,480.0 L612.71,505.0 L613.83,530.0 L614.34,550.0 L614.51,570.0 L614.51,725.2" stroke="url(#mgrad)" stroke-width="2.45" fill="none"/><path d="M580.85,190.0 L589.20,260.0 L597.54,330.0 L605.89,400.0 L609.46,430.0 L612.18,455.0 L614.36,480.0 L616.01,505.0 L617.13,530.0 L617.64,550.0 L617.81,570.0 L617.81,725.1" stroke="url(#mgrad)" stroke-width="2.45" fill="none"/><path d="M584.18,190.0 L592.54,260.0 L600.90,330.0 L609.26,400.0 L612.85,430.0 L615.57,455.0 L617.75,480.0 L619.40,505.0 L620.52,530.0 L621.04,550.0 L621.21,570.0 L621.21,724.9" stroke="url(#mgrad)" stroke-width="2.45" fill="none"/><path d="M587.42,190.0 L595.79,260.0 L604.17,330.0 L612.54,400.0 L616.13,430.0 L618.86,455.0 L621.05,480.0 L622.70,505.0 L623.82,530.0 L624.34,550.0 L624.51,570.0 L624.51,724.8" stroke="url(#mgrad)" stroke-width="2.45" fill="none"/><path d="M590.66,190.0 L599.05,260.0 L607.44,330.0 L615.83,400.0 L619.43,430.0 L622.15,455.0 L624.35,480.0 L626.01,505.0 L627.13,530.0 L627.64,550.0 L627.82,570.0 L627.82,724.7" stroke="url(#mgrad)" stroke-width="2.45" fill="none"/><path d="M593.92,190.0 L602.32,260.0 L610.72,330.0 L619.12,400.0 L622.72,430.0 L625.45,455.0 L627.64,480.0 L629.30,505.0 L630.43,530.0 L630.94,550.0 L631.12,570.0 L631.12,724.6" stroke="url(#mgrad)" stroke-width="2.45" fill="none"/><path d="M597.13,190.0 L605.53,260.0 L613.93,330.0 L622.33,400.0 L625.93,430.0 L628.67,455.0 L630.86,480.0 L632.52,505.0 L633.65,530.0 L634.16,550.0 L634.33,570.0 L634.33,724.5" stroke="url(#mgrad)" stroke-width="2.45" fill="none"/><path d="M600.43,190.0 L608.83,260.0 L617.23,330.0 L625.63,400.0 L629.23,430.0 L631.97,455.0 L634.16,480.0 L635.82,505.0 L636.95,530.0 L637.46,550.0 L637.63,570.0 L637.63,724.4" stroke="url(#mgrad)" stroke-width="2.45" fill="none"/><path d="M603.57,190.0 L611.97,260.0 L620.37,330.0 L628.77,400.0 L632.37,430.0 L635.10,455.0 L637.30,480.0 L638.96,505.0 L640.08,530.0 L640.60,550.0 L640.77,570.0 L640.77,724.2" stroke="url(#mgrad)" stroke-width="2.45" fill="none"/><path d="M606.87,190.0 L615.27,260.0 L623.67,330.0 L632.07,400.0 L635.67,430.0 L638.40,455.0 L640.60,480.0 L642.26,505.0 L643.38,530.0 L643.90,550.0 L644.07,570.0 L644.07,724.1" stroke="url(#mgrad)" stroke-width="2.45" fill="none"/><path d="M609.91,190.0 L618.31,260.0 L626.71,330.0 L635.11,400.0 L638.71,430.0 L641.44,455.0 L643.64,480.0 L645.30,505.0 L646.43,530.0 L646.94,550.0 L647.11,570.0 L647.11,724.0" stroke="url(#mgrad)" stroke-width="2.45" fill="none"/><path d="M613.21,190.0 L621.61,260.0 L630.01,330.0 L638.41,400.0 L642.01,430.0 L644.74,455.0 L646.94,480.0 L648.60,505.0 L649.73,530.0 L650.24,550.0 L650.41,570.0 L650.41,723.9" stroke="url(#mgrad)" stroke-width="2.45" fill="none"/><path d="M616.17,190.0 L624.57,260.0 L632.97,330.0 L641.37,400.0 L644.97,430.0 L647.70,455.0 L649.90,480.0 L651.56,505.0 L652.68,530.0 L653.20,550.0 L653.37,570.0 L653.37,723.8" stroke="url(#mgrad)" stroke-width="2.45" fill="none"/><path d="M619.47,190.0 L627.87,260.0 L636.27,330.0 L644.67,400.0 L648.27,430.0 L651.00,455.0 L653.20,480.0 L654.86,505.0 L655.98,530.0 L656.50,550.0 L656.67,570.0 L656.67,723.7" stroke="url(#mgrad)" stroke-width="2.45" fill="none"/><path d="M622.35,190.0 L630.75,260.0 L639.15,330.0 L647.55,400.0 L651.15,430.0 L653.88,455.0 L656.07,480.0 L657.73,505.0 L658.86,530.0 L659.37,550.0 L659.55,570.0 L659.55,723.6" stroke="url(#mgrad)" stroke-width="2.45" fill="none"/><path d="M625.65,190.0 L634.05,260.0 L642.45,330.0 L650.85,400.0 L654.45,430.0 L657.18,455.0 L659.37,480.0 L661.03,505.0 L662.16,530.0 L662.67,550.0 L662.85,570.0 L662.85,723.5" stroke="url(#mgrad)" stroke-width="2.45" fill="none"/><path d="M628.44,190.0 L636.84,260.0 L645.24,330.0 L653.64,400.0 L657.24,430.0 L659.97,455.0 L662.17,480.0 L663.83,505.0 L664.95,530.0 L665.47,550.0 L665.64,570.0 L665.64,723.4" stroke="url(#mgrad)" stroke-width="2.45" fill="none"/><path d="M631.74,190.0 L640.14,260.0 L648.54,330.0 L656.94,400.0 L660.54,430.0 L663.27,455.0 L665.47,480.0 L667.13,505.0 L668.25,530.0 L668.77,550.0 L668.94,570.0 L668.94,723.3" stroke="url(#mgrad)" stroke-width="2.45" fill="none"/><path d="M634.45,190.0 L642.85,260.0 L651.25,330.0 L659.65,400.0 L663.25,430.0 L665.98,455.0 L668.17,480.0 L669.84,505.0 L670.96,530.0 L671.47,550.0 L671.65,570.0 L671.65,723.2" stroke="url(#mgrad)" stroke-width="2.45" fill="none"/><path d="M637.75,190.0 L646.15,260.0 L654.55,330.0 L662.95,400.0 L666.55,430.0 L669.28,455.0 L671.47,480.0 L673.14,505.0 L674.26,530.0 L674.77,550.0 L674.95,570.0 L674.95,723.1" stroke="url(#mgrad)" stroke-width="2.45" fill="none"/><path d="M640.37,190.0 L648.77,260.0 L657.17,330.0 L665.57,400.0 L669.17,430.0 L671.91,455.0 L674.10,480.0 L675.76,505.0 L676.89,530.0 L677.40,550.0 L677.57,570.0 L677.57,723.0" stroke="url(#mgrad)" stroke-width="2.45" fill="none"/><path d="M643.67,190.0 L652.07,260.0 L660.47,330.0 L668.87,400.0 L672.47,430.0 L675.21,455.0 L677.40,480.0 L679.06,505.0 L680.19,530.0 L680.70,550.0 L680.87,570.0 L680.87,722.8" stroke="url(#mgrad)" stroke-width="2.45" fill="none"/><path d="M646.22,190.0 L654.62,260.0 L663.02,330.0 L671.42,400.0 L675.02,430.0 L677.75,455.0 L679.95,480.0 L681.61,505.0 L682.74,530.0 L683.25,550.0 L683.42,570.0 L683.42,722.8" stroke="url(#mgrad)" stroke-width="2.45" fill="none"/><path d="M649.52,190.0 L657.92,260.0 L666.32,330.0 L674.72,400.0 L678.32,430.0 L681.05,455.0 L683.25,480.0 L684.91,505.0 L686.04,530.0 L686.55,550.0 L686.72,570.0 L686.72,722.6" stroke="url(#mgrad)" stroke-width="2.45" fill="none"/><path d="M651.99,190.0 L660.39,260.0 L668.79,330.0 L677.19,400.0 L680.79,430.0 L683.52,455.0 L685.72,480.0 L687.38,505.0 L688.51,530.0 L689.02,550.0 L689.19,570.0 L689.19,722.6" stroke="url(#mgrad)" stroke-width="2.45" fill="none"/><path d="M655.29,190.0 L663.69,260.0 L672.09,330.0 L680.49,400.0 L684.09,430.0 L686.82,455.0 L689.02,480.0 L690.68,505.0 L691.81,530.0 L692.32,550.0 L692.49,570.0 L692.49,722.4" stroke="url(#mgrad)" stroke-width="2.45" fill="none"/><path d="M657.68,190.0 L666.08,260.0 L674.48,330.0 L682.88,400.0 L686.48,430.0 L689.21,455.0 L691.41,480.0 L693.07,505.0 L694.20,530.0 L694.71,550.0 L694.88,570.0 L694.88,722.4" stroke="url(#mgrad)" stroke-width="2.45" fill="none"/><path d="M660.98,190.0 L669.38,260.0 L677.78,330.0 L686.18,400.0 L689.78,430.0 L692.51,455.0 L694.71,480.0 L696.37,505.0 L697.50,530.0 L698.01,550.0 L698.18,570.0 L698.18,722.2" stroke="url(#mgrad)" stroke-width="2.45" fill="none"/></g><g clip-path="url(#cr)"><path d="M574.18,190.0 L582.50,260.0 L590.81,330.0 L599.12,400.0 L602.69,430.0 L605.39,455.0 L607.56,480.0 L609.21,505.0 L610.32,530.0 L610.83,550.0 L611.00,570.0 L611.00,725.3" stroke="url(#rgrad)" stroke-width="2.20" fill="none"/><path d="M577.12,190.0 L585.45,260.0 L593.78,330.0 L602.10,400.0 L605.67,430.0 L608.38,455.0 L610.56,480.0 L612.21,505.0 L613.32,530.0 L613.83,550.0 L614.00,570.0 L614.00,725.2" stroke="url(#rgrad)" stroke-width="2.20" fill="none"/><path d="M580.06,190.0 L588.40,260.0 L596.74,330.0 L605.08,400.0 L608.66,430.0 L611.37,455.0 L613.55,480.0 L615.20,505.0 L616.32,530.0 L616.83,550.0 L617.00,570.0 L617.00,725.1" stroke="url(#rgrad)" stroke-width="2.20" fill="none"/><path d="M583.00,190.0 L591.36,260.0 L599.71,330.0 L608.07,400.0 L611.65,430.0 L614.36,455.0 L616.55,480.0 L618.20,505.0 L619.32,530.0 L619.83,550.0 L620.00,570.0 L620.00,725.0" stroke="url(#rgrad)" stroke-width="2.20" fill="none"/><path d="M585.94,190.0 L594.31,260.0 L602.68,330.0 L611.05,400.0 L614.63,430.0 L617.35,455.0 L619.54,480.0 L621.20,505.0 L622.32,530.0 L622.83,550.0 L623.00,570.0 L623.00,724.9" stroke="url(#rgrad)" stroke-width="2.20" fill="none"/><path d="M588.88,190.0 L597.26,260.0 L605.64,330.0 L614.03,400.0 L617.62,430.0 L620.34,455.0 L622.54,480.0 L624.19,505.0 L625.32,530.0 L625.83,550.0 L626.00,570.0 L626.00,724.8" stroke="url(#rgrad)" stroke-width="2.20" fill="none"/><path d="M591.82,190.0 L600.22,260.0 L608.61,330.0 L617.01,400.0 L620.60,430.0 L623.34,455.0 L625.53,480.0 L627.19,505.0 L628.31,530.0 L628.83,550.0 L629.00,570.0 L629.00,724.7" stroke="url(#rgrad)" stroke-width="2.20" fill="none"/><path d="M594.80,190.0 L603.20,260.0 L611.60,330.0 L620.00,400.0 L623.60,430.0 L626.33,455.0 L628.53,480.0 L630.19,505.0 L631.31,530.0 L631.83,550.0 L632.00,570.0 L632.00,724.6" stroke="url(#rgrad)" stroke-width="2.20" fill="none"/><path d="M597.80,190.0 L606.20,260.0 L614.60,330.0 L623.00,400.0 L626.60,430.0 L629.33,455.0 L631.53,480.0 L633.19,505.0 L634.31,530.0 L634.83,550.0 L635.00,570.0 L635.00,724.5" stroke="url(#rgrad)" stroke-width="2.20" fill="none"/><path d="M600.80,190.0 L609.20,260.0 L617.60,330.0 L626.00,400.0 L629.60,430.0 L632.33,455.0 L634.53,480.0 L636.19,505.0 L637.31,530.0 L637.83,550.0 L638.00,570.0 L638.00,724.3" stroke="url(#rgrad)" stroke-width="2.20" fill="none"/><path d="M603.80,190.0 L612.20,260.0 L620.60,330.0 L629.00,400.0 L632.60,430.0 L635.33,455.0 L637.53,480.0 L639.19,505.0 L640.31,530.0 L640.83,550.0 L641.00,570.0 L641.00,724.2" stroke="url(#rgrad)" stroke-width="2.20" fill="none"/><path d="M606.80,190.0 L615.20,260.0 L623.60,330.0 L632.00,400.0 L635.60,430.0 L638.33,455.0 L640.53,480.0 L642.19,505.0 L643.31,530.0 L643.83,550.0 L644.00,570.0 L644.00,724.1" stroke="url(#rgrad)" stroke-width="2.20" fill="none"/><path d="M609.80,190.0 L618.20,260.0 L626.60,330.0 L635.00,400.0 L638.60,430.0 L641.33,455.0 L643.53,480.0 L645.19,505.0 L646.31,530.0 L646.83,550.0 L647.00,570.0 L647.00,724.0" stroke="url(#rgrad)" stroke-width="2.20" fill="none"/><path d="M612.80,190.0 L621.20,260.0 L629.60,330.0 L638.00,400.0 L641.60,430.0 L644.33,455.0 L646.53,480.0 L648.19,505.0 L649.31,530.0 L649.83,550.0 L650.00,570.0 L650.00,723.9" stroke="url(#rgrad)" stroke-width="2.20" fill="none"/><path d="M615.80,190.0 L624.20,260.0 L632.60,330.0 L641.00,400.0 L644.60,430.0 L647.33,455.0 L649.53,480.0 L651.19,505.0 L652.31,530.0 L652.83,550.0 L653.00,570.0 L653.00,723.8" stroke="url(#rgrad)" stroke-width="2.20" fill="none"/><path d="M618.80,190.0 L627.20,260.0 L635.60,330.0 L644.00,400.0 L647.60,430.0 L650.33,455.0 L652.53,480.0 L654.19,505.0 L655.31,530.0 L655.83,550.0 L656.00,570.0 L656.00,723.7" stroke="url(#rgrad)" stroke-width="2.20" fill="none"/><path d="M621.80,190.0 L630.20,260.0 L638.60,330.0 L647.00,400.0 L650.60,430.0 L653.33,455.0 L655.53,480.0 L657.19,505.0 L658.31,530.0 L658.83,550.0 L659.00,570.0 L659.00,723.6" stroke="url(#rgrad)" stroke-width="2.20" fill="none"/><path d="M624.80,190.0 L633.20,260.0 L641.60,330.0 L650.00,400.0 L653.60,430.0 L656.33,455.0 L658.53,480.0 L660.19,505.0 L661.31,530.0 L661.83,550.0 L662.00,570.0 L662.00,723.5" stroke="url(#rgrad)" stroke-width="2.20" fill="none"/><path d="M627.80,190.0 L636.20,260.0 L644.60,330.0 L653.00,400.0 L656.60,430.0 L659.33,455.0 L661.53,480.0 L663.19,505.0 L664.31,530.0 L664.83,550.0 L665.00,570.0 L665.00,723.4" stroke="url(#rgrad)" stroke-width="2.20" fill="none"/><path d="M630.80,190.0 L639.20,260.0 L647.60,330.0 L656.00,400.0 L659.60,430.0 L662.33,455.0 L664.53,480.0 L666.19,505.0 L667.31,530.0 L667.83,550.0 L668.00,570.0 L668.00,723.3" stroke="url(#rgrad)" stroke-width="2.20" fill="none"/><path d="M633.80,190.0 L642.20,260.0 L650.60,330.0 L659.00,400.0 L662.60,430.0 L665.33,455.0 L667.53,480.0 L669.19,505.0 L670.31,530.0 L670.83,550.0 L671.00,570.0 L671.00,723.2" stroke="url(#rgrad)" stroke-width="2.20" fill="none"/><path d="M636.80,190.0 L645.20,260.0 L653.60,330.0 L662.00,400.0 L665.60,430.0 L668.33,455.0 L670.53,480.0 L672.19,505.0 L673.31,530.0 L673.83,550.0 L674.00,570.0 L674.00,723.1" stroke="url(#rgrad)" stroke-width="2.20" fill="none"/><path d="M639.80,190.0 L648.20,260.0 L656.60,330.0 L665.00,400.0 L668.60,430.0 L671.33,455.0 L673.53,480.0 L675.19,505.0 L676.31,530.0 L676.83,550.0 L677.00,570.0 L677.00,723.0" stroke="url(#rgrad)" stroke-width="2.20" fill="none"/><path d="M642.80,190.0 L651.20,260.0 L659.60,330.0 L668.00,400.0 L671.60,430.0 L674.33,455.0 L676.53,480.0 L678.19,505.0 L679.31,530.0 L679.83,550.0 L680.00,570.0 L680.00,722.9" stroke="url(#rgrad)" stroke-width="2.20" fill="none"/><path d="M645.80,190.0 L654.20,260.0 L662.60,330.0 L671.00,400.0 L674.60,430.0 L677.33,455.0 L679.53,480.0 L681.19,505.0 L682.31,530.0 L682.83,550.0 L683.00,570.0 L683.00,722.8" stroke="url(#rgrad)" stroke-width="2.20" fill="none"/><path d="M648.80,190.0 L657.20,260.0 L665.60,330.0 L674.00,400.0 L677.60,430.0 L680.33,455.0 L682.53,480.0 L684.19,505.0 L685.31,530.0 L685.83,550.0 L686.00,570.0 L686.00,722.7" stroke="url(#rgrad)" stroke-width="2.20" fill="none"/><path d="M651.80,190.0 L660.20,260.0 L668.60,330.0 L677.00,400.0 L680.60,430.0 L683.33,455.0 L685.53,480.0 L687.19,505.0 L688.31,530.0 L688.83,550.0 L689.00,570.0 L689.00,722.6" stroke="url(#rgrad)" stroke-width="2.20" fill="none"/><path d="M654.80,190.0 L663.20,260.0 L671.60,330.0 L680.00,400.0 L683.60,430.0 L686.33,455.0 L688.53,480.0 L690.19,505.0 L691.31,530.0 L691.83,550.0 L692.00,570.0 L692.00,722.5" stroke="url(#rgrad)" stroke-width="2.20" fill="none"/><path d="M657.80,190.0 L666.20,260.0 L674.60,330.0 L683.00,400.0 L686.60,430.0 L689.33,455.0 L691.53,480.0 L693.19,505.0 L694.31,530.0 L694.83,550.0 L695.00,570.0 L695.00,722.4" stroke="url(#rgrad)" stroke-width="2.20" fill="none"/><path d="M660.80,190.0 L669.20,260.0 L677.60,330.0 L686.00,400.0 L689.60,430.0 L692.33,455.0 L694.53,480.0 L696.19,505.0 L697.31,530.0 L697.83,550.0 L698.00,570.0 L698.00,722.2" stroke="url(#rgrad)" stroke-width="2.20" fill="none"/><path d="M663.80,190.0 L672.20,260.0 L680.60,330.0 L689.00,400.0 L692.60,430.0 L695.33,455.0 L697.53,480.0 L699.19,505.0 L700.31,530.0 L700.83,550.0 L701.00,570.0 L701.00,722.1" stroke="url(#rgrad)" stroke-width="2.20" fill="none"/><path d="M666.80,190.0 L675.20,260.0 L683.60,330.0 L692.00,400.0 L695.60,430.0 L698.33,455.0 L700.53,480.0 L702.19,505.0 L703.31,530.0 L703.83,550.0 L704.00,570.0 L704.00,722.0" stroke="url(#rgrad)" stroke-width="2.20" fill="none"/><path d="M669.80,190.0 L678.20,260.0 L686.60,330.0 L695.00,400.0 L698.60,430.0 L701.33,455.0 L703.53,480.0 L705.19,505.0 L706.31,530.0 L706.83,550.0 L707.00,570.0 L707.00,721.9" stroke="url(#rgrad)" stroke-width="2.20" fill="none"/><path d="M672.80,190.0 L681.20,260.0 L689.60,330.0 L698.00,400.0 L701.60,430.0 L704.33,455.0 L706.53,480.0 L708.19,505.0 L709.31,530.0 L709.83,550.0 L710.00,570.0 L710.00,721.8" stroke="url(#rgrad)" stroke-width="2.20" fill="none"/><path d="M675.80,190.0 L684.20,260.0 L692.60,330.0 L701.00,400.0 L704.60,430.0 L707.33,455.0 L709.53,480.0 L711.19,505.0 L712.31,530.0 L712.83,550.0 L713.00,570.0 L713.00,721.7" stroke="url(#rgrad)" stroke-width="2.20" fill="none"/><path d="M678.80,190.0 L687.20,260.0 L695.60,330.0 L704.00,400.0 L707.60,430.0 L710.33,455.0 L712.53,480.0 L714.19,505.0 L715.31,530.0 L715.83,550.0 L716.00,570.0 L716.00,721.6" stroke="url(#rgrad)" stroke-width="2.20" fill="none"/><path d="M681.80,190.0 L690.20,260.0 L698.60,330.0 L707.00,400.0 L710.60,430.0 L713.33,455.0 L715.53,480.0 L717.19,505.0 L718.31,530.0 L718.83,550.0 L719.00,570.0 L719.00,721.5" stroke="url(#rgrad)" stroke-width="2.20" fill="none"/><path d="M684.80,190.0 L693.20,260.0 L701.60,330.0 L710.00,400.0 L713.60,430.0 L716.33,455.0 L718.53,480.0 L720.19,505.0 L721.31,530.0 L721.83,550.0 L722.00,570.0 L722.00,721.4" stroke="url(#rgrad)" stroke-width="2.20" fill="none"/><path d="M687.80,190.0 L696.20,260.0 L704.60,330.0 L713.00,400.0 L716.60,430.0 L719.33,455.0 L721.53,480.0 L723.19,505.0 L724.31,530.0 L724.83,550.0 L725.00,570.0 L725.00,721.3" stroke="url(#rgrad)" stroke-width="2.20" fill="none"/><path d="M690.80,190.0 L699.20,260.0 L707.60,330.0 L716.00,400.0 L719.60,430.0 L722.33,455.0 L724.53,480.0 L726.19,505.0 L727.31,530.0 L727.83,550.0 L728.00,570.0 L728.00,721.2" stroke="url(#rgrad)" stroke-width="2.20" fill="none"/></g><defs><linearGradient id="hx" gradientUnits="userSpaceOnUse" x1="645" y1="0" x2="676" y2="0"><stop offset="0" stop-color="#f03000" stop-opacity="0"/><stop offset="1" stop-color="#f03000" stop-opacity="0.35"/></linearGradient></defs><defs><linearGradient id="vm" gradientUnits="userSpaceOnUse" x1="0" y1="191" x2="0" y2="736"><stop offset="0" stop-color="#fff"/><stop offset="0.2" stop-color="#fff"/><stop offset="0.35" stop-color="#000"/><stop offset="0.55" stop-color="#000"/><stop offset="0.72" stop-color="#fff"/><stop offset="1" stop-color="#fff"/></linearGradient><mask id="hxm" maskUnits="userSpaceOnUse" x="600" y="180" width="80" height="560"><rect x="600" y="180" width="80" height="560" fill="url(#vm)"/></mask></defs><defs><clipPath id="ordclip"><polygon points="305,191 676,191 676,723.0 305,736.0"/></clipPath></defs><rect x="645" y="191" width="31" height="545" fill="url(#hx)" mask="url(#hxm)" clip-path="url(#ordclip)"/><rect x="490" y="640" width="186" height="96" fill="url(#bf)" clip-path="url(#ordclip)"/><defs><linearGradient id="rb" gradientUnits="userSpaceOnUse" x1="0" y1="600" x2="0" y2="725"><stop offset="0" stop-color="#e80000" stop-opacity="0"/><stop offset="1" stop-color="#e80000" stop-opacity="0.6"/></linearGradient></defs><rect x="633" y="600" width="43" height="136" fill="url(#rb)" clip-path="url(#ordclip)"/><defs><pattern id="hstr" patternUnits="userSpaceOnUse" x="0" y="0" width="8" height="4"><rect x="0" y="0" width="8" height="2" fill="#e80000"/></pattern></defs><rect x="305" y="660" width="185" height="15" fill="url(#hstr)" fill-opacity="0.15"/><rect x="305" y="675" width="185" height="15" fill="url(#hstr)" fill-opacity="0.3"/><rect x="305" y="690" width="185" height="15" fill="url(#hstr)" fill-opacity="0.45"/><rect x="305" y="705" width="185" height="15" fill="url(#hstr)" fill-opacity="0.6"/><rect x="305" y="720" width="185" height="17" fill="url(#hstr)" fill-opacity="0.7"/><rect x="305" y="191" width="371" height="14" fill="url(#tf)"/><polygon points="480,500 676,500 676,723.0 480,729.9" fill="url(#wedge)"/><circle cx="270" cy="325" r="457" fill="none" stroke="#ffe000" stroke-width="2" stroke-dasharray="2 3" stroke-opacity="0.8" clip-path="url(#wclip)"/><circle cx="270" cy="325" r="430" fill="none" stroke="#ffe000" stroke-width="2" stroke-dasharray="2 3" stroke-opacity="0.35" clip-path="url(#wclip)"/><circle cx="270" cy="325" r="490" fill="none" stroke="#ffe000" stroke-width="2" stroke-dasharray="2 3" stroke-opacity="0.5" clip-path="url(#wclip)"/><defs><clipPath id="wclip"><polygon points="490,470 676,470 676,723.0 490,729.5"/></clipPath></defs><rect x="349.5" y="470" width="4.0" height="264.4" fill="#dc0000"/><rect x="394.0" y="470" width="3.5" height="262.9" fill="#dc0000"/><rect x="443.5" y="470" width="3.0" height="261.2" fill="#dc0000"/><rect x="489.5" y="190.0" width="4.0" height="539.5" fill="#dc0000"/><rect x="537.0" y="190.0" width="3.5" height="537.9" fill="#dc0000"/><rect x="582.5" y="190.0" width="4.0" height="536.3" fill="#dc0000"/><rect x="629.2" y="190.0" width="3.6" height="534.7" fill="#dc0000"/><rect x="305" y="459" width="371" height="3.8" fill="#dc0000"/><polygon points="305,189.5 676,189.5 676,194.5" fill="#df0000"/><rect x="386.8" y="139.3" width="1.6" height="1.6" fill="#fff"/></g><defs><linearGradient id="hot" x1="0" y1="1" x2="0" y2="0"><stop offset="0" stop-color="rgb(10,0,0)"/><stop offset="0.365079" stop-color="rgb(255,0,0)"/><stop offset="0.746032" stop-color="rgb(255,255,0)"/><stop offset="1" stop-color="rgb(255,255,255)"/></linearGradient></defs><rect x="712" y="113" width="35" height="696" fill="url(#hot)"/><path d="M911.2,404.8 L925.0,404.8 L925.0,291.9 L929.9,291.9 L929.9,290.8 L936.0,290.8 L936.0,304.9 L940.9,304.9 L940.9,307.7 L947.0,307.7 L947.0,310.8 L952.8,310.8 L952.8,312.9 L958.4,312.9 L958.4,313.9 L964.0,313.9 L964.0,314.9 L969.2,314.9 L969.2,316.9 L975.2,316.9 L975.2,317.8 L980.9,317.8 L980.9,319.0 L986.5,319.0 L986.5,319.9 L992.1,319.9 L992.1,321.0 L997.7,321.0 L997.7,322.2 L1002.3,322.2 L1002.3,323.0 L1008.6,323.0 L1008.6,324.4 L1014.4,324.4 L1014.4,325.5 L1019.5,325.5 L1019.5,326.4 L1024.7,326.4 L1024.7,327.8 L1031.0,327.8 L1031.0,329.0 L1036.8,329.0 L1036.8,331.0 L1042.0,331.0 L1042.0,333.0 L1047.7,333.0 L1047.7,334.1 L1052.9,334.1 L1052.9,335.9 L1058.6,335.9 L1058.6,337.9 L1063.8,337.9 L1063.8,340.8 L1069.9,340.8 L1069.9,345.9 L1075.9,345.9 L1075.9,353.7 L1081.0,353.7 L1081.0,370.7 L1086.8,370.7 L1086.8,404.8 L1185.0,404.8" fill="none" stroke="#0000ff" stroke-width="1.4"/><path d="M911.2,233.0 L992.0,233.0 L992.0,130.9 L997.1,130.9 L997.1,119.1 L1002.9,119.1 L1002.9,125.8 L1008.9,125.8 L1008.9,130.8 L1013.9,130.8 L1013.9,135.0 L1019.8,135.0 L1019.8,137.9 L1024.8,137.9 L1024.8,142.9 L1030.8,142.9 L1030.8,144.9 L1036.9,144.9 L1036.9,146.8 L1042.2,146.8 L1042.2,149.0 L1048.0,149.0 L1048.0,149.9 L1053.7,149.9 L1053.7,151.1 L1059.2,151.1 L1059.2,152.0 L1075.9,152.0 L1075.9,152.8 L1098.2,152.8 L1098.2,153.8 L1147.8,153.8 L1147.8,154.7 L1182.0,154.7 L1182.0,121.0 L1185.0,121.0" fill="none" stroke="#0000ff" stroke-width="1.4" stroke-linejoin="miter"/><rect x="305" y="113" width="371" height="696" fill="none" stroke="#000" stroke-width="1.7"/><line x1="298.2" y1="809.00" x2="305" y2="809.00" stroke="#000" stroke-width="1.7"/><line x1="298.2" y1="659.25" x2="305" y2="659.25" stroke="#000" stroke-width="1.7"/><line x1="298.2" y1="509.50" x2="305" y2="509.50" stroke="#000" stroke-width="1.7"/><line x1="298.2" y1="359.75" x2="305" y2="359.75" stroke="#000" stroke-width="1.7"/><line x1="298.2" y1="210.00" x2="305" y2="210.00" stroke="#000" stroke-width="1.7"/><line x1="305.00" y1="809" x2="305.00" y2="815.8" stroke="#000" stroke-width="1.7"/><line x1="379.95" y1="809" x2="379.95" y2="815.8" stroke="#000" stroke-width="1.7"/><line x1="454.90" y1="809" x2="454.90" y2="815.8" stroke="#000" stroke-width="1.7"/><line x1="529.85" y1="809" x2="529.85" y2="815.8" stroke="#000" stroke-width="1.7"/><line x1="604.80" y1="809" x2="604.80" y2="815.8" stroke="#000" stroke-width="1.7"/><rect x="712" y="113" width="35" height="696" fill="none" stroke="#000" stroke-width="1.7"/><line x1="747" y1="113" x2="753.8" y2="113" stroke="#000" stroke-width="1.7"/><line x1="747" y1="229" x2="753.8" y2="229" stroke="#000" stroke-width="1.7"/><line x1="747" y1="345" x2="753.8" y2="345" stroke="#000" stroke-width="1.7"/><line x1="747" y1="461" x2="753.8" y2="461" stroke="#000" stroke-width="1.7"/><line x1="747" y1="577" x2="753.8" y2="577" stroke="#000" stroke-width="1.7"/><line x1="747" y1="693" x2="753.8" y2="693" stroke="#000" stroke-width="1.7"/><line x1="747" y1="809" x2="753.8" y2="809" stroke="#000" stroke-width="1.7"/><rect x="911.2" y="113" width="273.79999999999995" height="120" fill="none" stroke="#000" stroke-width="1.7"/><line x1="904.4" y1="233.00" x2="911.2" y2="233.00" stroke="#000" stroke-width="1.7"/><line x1="904.4" y1="198.52" x2="911.2" y2="198.52" stroke="#000" stroke-width="1.7"/><line x1="904.4" y1="164.03" x2="911.2" y2="164.03" stroke="#000" stroke-width="1.7"/><line x1="904.4" y1="129.55" x2="911.2" y2="129.55" stroke="#000" stroke-width="1.7"/><rect x="911.2" y="285" width="273.79999999999995" height="119.80000000000001" fill="none" stroke="#000" stroke-width="1.7"/><line x1="904.4" y1="404.80" x2="911.2" y2="404.80" stroke="#000" stroke-width="1.7"/><line x1="904.4" y1="370.37" x2="911.2" y2="370.37" stroke="#000" stroke-width="1.7"/><line x1="904.4" y1="335.95" x2="911.2" y2="335.95" stroke="#000" stroke-width="1.7"/><line x1="904.4" y1="301.52" x2="911.2" y2="301.52" stroke="#000" stroke-width="1.7"/><line x1="911" y1="233" x2="911" y2="239.6" stroke="#000" stroke-width="1.7"/><line x1="957" y1="233" x2="957" y2="239.6" stroke="#000" stroke-width="1.7"/><line x1="1003.9" y1="233" x2="1003.9" y2="239.6" stroke="#000" stroke-width="1.7"/><line x1="1050.2" y1="233" x2="1050.2" y2="239.6" stroke="#000" stroke-width="1.7"/><line x1="1096.6" y1="233" x2="1096.6" y2="239.6" stroke="#000" stroke-width="1.7"/><line x1="929.70" y1="404.8" x2="929.70" y2="411.4" stroke="#000" stroke-width="1.7"/><line x1="966.87" y1="404.8" x2="966.87" y2="411.4" stroke="#000" stroke-width="1.7"/><line x1="1004.03" y1="404.8" x2="1004.03" y2="411.4" stroke="#000" stroke-width="1.7"/><line x1="1041.20" y1="404.8" x2="1041.20" y2="411.4" stroke="#000" stroke-width="1.7"/><line x1="1078.37" y1="404.8" x2="1078.37" y2="411.4" stroke="#000" stroke-width="1.7"/><line x1="1115.53" y1="404.8" x2="1115.53" y2="411.4" stroke="#000" stroke-width="1.7"/><line x1="1152.70" y1="404.8" x2="1152.70" y2="411.4" stroke="#000" stroke-width="1.7"/><g font-family="Liberation Sans, sans-serif" fill="#000" opacity="0.999"><text x="5.27" y="23.10" font-size="17.72" textLength="195.36" lengthAdjust="spacingAndGlyphs">2023-02-10: ESPRESSO</text><text x="336.15" y="22.40" font-size="13.29" textLength="55.34" lengthAdjust="spacingAndGlyphs">type info</text><text x="628.70" y="22.30" font-size="13.29" textLength="66.89" lengthAdjust="spacingAndGlyphs">set-up info</text><text x="6.20" y="45.20" font-size="13.29" textLength="61.85" lengthAdjust="spacingAndGlyphs">ORIGFILE:</text><text x="74.70" y="45.20" font-size="13.29" textLength="255.19" lengthAdjust="spacingAndGlyphs">ESPRESSO_MULTIMR_WAVE042_0001.fits</text><text x="6.20" y="61.50" font-size="13.29" textLength="55.29" lengthAdjust="spacingAndGlyphs">ARCFILE:</text><text x="74.70" y="61.50" font-size="13.29" textLength="231.44" lengthAdjust="spacingAndGlyphs">ESPRE.2023-02-11T12:45:02.164.fits</text><text x="6.20" y="79.50" font-size="13.29" textLength="61.41" lengthAdjust="spacingAndGlyphs">raw_type:</text><text x="74.70" y="79.50" font-size="13.29" textLength="77.83" lengthAdjust="spacingAndGlyphs">WAVE_FP_FP</text><text x="6.20" y="97.50" font-size="13.29" textLength="57.07" lengthAdjust="spacingAndGlyphs">do_class:</text><text x="74.70" y="97.50" font-size="13.29" textLength="35.71" lengthAdjust="spacingAndGlyphs">FP_FP</text><text x="6.20" y="113.50" font-size="13.29" textLength="65.15" lengthAdjust="spacingAndGlyphs">extension:</text><text x="74.70" y="113.50" font-size="13.29" textLength="7.95" lengthAdjust="spacingAndGlyphs">1</text><text x="336.15" y="44.20" font-size="13.29" textLength="67.22" lengthAdjust="spacingAndGlyphs">DPR.CATG:</text><text x="404.60" y="44.20" font-size="13.29" textLength="36.51" lengthAdjust="spacingAndGlyphs">CALIB</text><text x="336.15" y="61.60" font-size="13.29" textLength="64.29" lengthAdjust="spacingAndGlyphs">DPR.TYPE:</text><text x="404.60" y="61.60" font-size="13.29" textLength="73.28" lengthAdjust="spacingAndGlyphs">WAVE,FP,FP</text><text x="336.15" y="79.50" font-size="13.29" textLength="67.25" lengthAdjust="spacingAndGlyphs">DPR.TECH:</text><text x="404.60" y="79.50" font-size="13.29" textLength="55.75" lengthAdjust="spacingAndGlyphs">ECHELLE</text><text x="336.15" y="96.90" font-size="13.29" textLength="43.63" lengthAdjust="spacingAndGlyphs">TPL.ID:</text><text x="404.60" y="96.90" font-size="13.29" textLength="186.81" lengthAdjust="spacingAndGlyphs">ESPRESSO_multiMR_cal_wave</text><text x="628.70" y="43.10" font-size="11.08" textLength="56.10" lengthAdjust="spacingAndGlyphs">INS.MODE:</text><text x="759.45" y="43.10" font-size="11.08" textLength="46.66" lengthAdjust="spacingAndGlyphs">MULTIMR</text><text x="628.70" y="56.10" font-size="11.08" textLength="51.71" lengthAdjust="spacingAndGlyphs">DET.BINX:</text><text x="759.45" y="56.10" font-size="11.08" textLength="6.63" lengthAdjust="spacingAndGlyphs">4</text><text x="628.70" y="68.90" font-size="11.08" textLength="49.56" lengthAdjust="spacingAndGlyphs">DET.BINY:</text><text x="759.45" y="68.90" font-size="11.08" textLength="6.63" lengthAdjust="spacingAndGlyphs">2</text><text x="284.30" y="812.64" font-size="10.63" textLength="6.36" lengthAdjust="spacingAndGlyphs">0</text><text x="265.22" y="662.89" font-size="10.63" textLength="25.45" lengthAdjust="spacingAndGlyphs">1000</text><text x="265.22" y="513.14" font-size="10.63" textLength="25.45" lengthAdjust="spacingAndGlyphs">2000</text><text x="265.22" y="363.39" font-size="10.63" textLength="25.45" lengthAdjust="spacingAndGlyphs">3000</text><text x="265.22" y="213.64" font-size="10.63" textLength="25.45" lengthAdjust="spacingAndGlyphs">4000</text><text x="301.82" y="832.00" font-size="10.63" textLength="6.36" lengthAdjust="spacingAndGlyphs">0</text><text x="370.35" y="832.00" font-size="10.63" textLength="19.09" lengthAdjust="spacingAndGlyphs">500</text><text x="441.96" y="832.00" font-size="10.63" textLength="25.45" lengthAdjust="spacingAndGlyphs">1000</text><text x="516.91" y="832.00" font-size="10.63" textLength="25.45" lengthAdjust="spacingAndGlyphs">1500</text><text x="592.04" y="832.00" font-size="10.63" textLength="25.45" lengthAdjust="spacingAndGlyphs">2000</text><text x="487.28" y="850.10" font-size="10.63" textLength="6.85" lengthAdjust="spacingAndGlyphs">X</text><text transform="translate(252.90,460.70) rotate(-90)" x="-3.05" y="0" font-size="10.63" textLength="6.11" lengthAdjust="spacingAndGlyphs">Y</text><text x="761.74" y="116.64" font-size="10.63" textLength="25.45" lengthAdjust="spacingAndGlyphs">3000</text><text x="761.76" y="232.64" font-size="10.63" textLength="25.45" lengthAdjust="spacingAndGlyphs">2500</text><text x="761.76" y="348.64" font-size="10.63" textLength="25.45" lengthAdjust="spacingAndGlyphs">2000</text><text x="761.40" y="464.64" font-size="10.63" textLength="25.45" lengthAdjust="spacingAndGlyphs">1500</text><text x="761.40" y="580.64" font-size="10.63" textLength="25.45" lengthAdjust="spacingAndGlyphs">1000</text><text x="761.72" y="696.64" font-size="10.63" textLength="19.09" lengthAdjust="spacingAndGlyphs">500</text><text x="761.84" y="812.64" font-size="10.63" textLength="6.36" lengthAdjust="spacingAndGlyphs">0</text><text x="890.56" y="132.84" font-size="10.63" textLength="6.36" lengthAdjust="spacingAndGlyphs">6</text><text x="890.50" y="167.24" font-size="10.63" textLength="6.36" lengthAdjust="spacingAndGlyphs">4</text><text x="890.94" y="201.34" font-size="10.63" textLength="6.36" lengthAdjust="spacingAndGlyphs">2</text><text x="890.60" y="236.64" font-size="10.63" textLength="6.36" lengthAdjust="spacingAndGlyphs">0</text><text x="1030.55" y="273.60" font-size="11.08" textLength="34.83" lengthAdjust="spacingAndGlyphs">counts</text><text transform="translate(878.00,173.50) rotate(-90)" x="-36.06" y="0" font-size="11.08" textLength="71.46" lengthAdjust="spacingAndGlyphs">log frequency</text><text x="890.56" y="304.84" font-size="10.63" textLength="6.36" lengthAdjust="spacingAndGlyphs">6</text><text x="890.50" y="339.24" font-size="10.63" textLength="6.36" lengthAdjust="spacingAndGlyphs">4</text><text x="890.94" y="373.34" font-size="10.63" textLength="6.36" lengthAdjust="spacingAndGlyphs">2</text><text x="890.60" y="408.64" font-size="10.63" textLength="6.36" lengthAdjust="spacingAndGlyphs">0</text><text x="1030.55" y="445.60" font-size="11.08" textLength="34.83" lengthAdjust="spacingAndGlyphs">counts</text><text transform="translate(878.00,345.50) rotate(-90)" x="-36.06" y="0" font-size="11.08" textLength="71.46" lengthAdjust="spacingAndGlyphs">log frequency</text><text x="907.82" y="255.90" font-size="10.63" textLength="6.36" lengthAdjust="spacingAndGlyphs">0</text><text x="990.96" y="255.90" font-size="10.63" textLength="25.45" lengthAdjust="spacingAndGlyphs">1000</text><text x="1083.84" y="255.90" font-size="10.63" textLength="25.45" lengthAdjust="spacingAndGlyphs">2000</text><text x="926.52" y="427.90" font-size="10.63" textLength="6.36" lengthAdjust="spacingAndGlyphs">0</text><text x="987.76" y="427.90" font-size="10.63" textLength="31.81" lengthAdjust="spacingAndGlyphs">20000</text><text x="1062.49" y="427.90" font-size="10.63" textLength="31.81" lengthAdjust="spacingAndGlyphs">40000</text><text x="1136.78" y="427.90" font-size="10.63" textLength="31.81" lengthAdjust="spacingAndGlyphs">60000</text><text transform="translate(1193.90,175.00) rotate(90)" x="-46.80" y="0" font-size="11.08" textLength="93.55" lengthAdjust="spacingAndGlyphs">histogram (detail)</text><text transform="translate(1193.90,349.60) rotate(90)" x="-40.18" y="0" font-size="11.08" textLength="80.33" lengthAdjust="spacingAndGlyphs">histogram (full)</text><text x="987.40" y="576.70" font-size="11.08" textLength="117.97" lengthAdjust="spacingAndGlyphs">cut in x not configured</text><text x="987.40" y="750.90" font-size="11.08" textLength="117.97" lengthAdjust="spacingAndGlyphs">cut in y not configured</text><text x="6.20" y="863.70" font-size="11.08" textLength="171.69" lengthAdjust="spacingAndGlyphs">powered by QC: www.eso.org/HC</text><text x="936.20" y="863.70" font-size="11.08" textLength="302.80" lengthAdjust="spacingAndGlyphs">created by qc_rawdisp.py v1.2.3 on 2023-02-11T13:22:38</text></g></svg></body></html>
